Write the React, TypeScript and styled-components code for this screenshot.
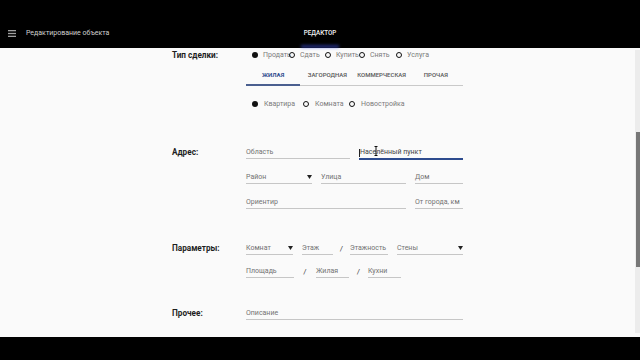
import React from 'react'
import styled, { createGlobalStyle } from 'styled-components'

const Global = createGlobalStyle`
  html, body { margin: 0; padding: 0; overflow: hidden; background: #000; }
  body { font-family: Roboto, "Noto Sans", sans-serif; }
  * { box-sizing: border-box; }
`

const BLUE = '#2d4b8e'

const Screen = styled.div`
  width: 640px;
  height: 360px;
  display: flex;
  flex-direction: column;
  background: #000;
`

const Header = styled.header`
  height: 48px;
  background: #000;
  display: grid;
  grid-template-columns: 1fr auto 1fr;
  align-items: end;
`

const Brand = styled.div`
  display: flex;
  align-items: center;
  gap: 10px;
  padding-left: 8px;
  height: 28px;
  padding-bottom: 2px;
  color: #d0d0d0;
  font-size: 7px;
`

const HeadTab = styled.div`
  position: relative;
  width: 42px;
  height: 28px;
  display: flex;
  align-items: center;
  justify-content: center;
  padding-bottom: 2px;
  color: #f2f2f2;
  font-size: 6.3px;
  font-weight: 500;
  &::after {
    content: '';
    position: absolute;
    left: 2px;
    right: 2px;
    bottom: 0;
    height: 3px;
    background: rgba(60, 80, 230, 0.55);
    filter: blur(1.5px);
  }
`

const Body = styled.div`
  flex: 1;
  display: flex;
  background: #fafafa;
  overflow: hidden;
`

const Content = styled.main`
  flex: 1;
  display: flex;
  justify-content: center;
`

const Form = styled.div`
  width: 291px;
  display: flex;
  flex-direction: column;
`

const Section = styled.section<{ $mt: number }>`
  display: grid;
  grid-template-columns: 74px 217px;
  margin-top: ${(p) => p.$mt}px;
`

const Label = styled.div<{ $pt: number }>`
  padding-top: ${(p) => p.$pt}px;
  line-height: 14px;
  font-size: 8.2px;
  font-weight: 700;
  color: #1e1e1e;
`

const Stack = styled.div<{ $gap: number }>`
  display: flex;
  flex-direction: column;
  gap: ${(p) => p.$gap}px;
`

const RadioRow = styled.div<{ $mt?: number }>`
  display: flex;
  align-items: center;
  height: 14px;
  padding-left: 6px;
  margin-top: ${(p) => p.$mt ?? 0}px;
`

const RadioItem = styled.label<{ $w?: number; $gap: number }>`
  display: flex;
  align-items: center;
  gap: ${(p) => p.$gap}px;
  width: ${(p) => (p.$w ? `${p.$w}px` : 'auto')};
  flex: none;
  font-size: 7px;
  color: #7a7a7a;
  white-space: nowrap;
`

const Circle = styled.span<{ $on?: boolean }>`
  width: 6px;
  height: 6px;
  border-radius: 50%;
  flex: none;
  background: ${(p) => (p.$on ? '#111' : 'transparent')};
  border: ${(p) => (p.$on ? 'none' : '1.4px solid #111')};
`

const Tabs = styled.div`
  display: grid;
  grid-template-columns: repeat(4, 1fr);
  height: 23px;
  margin-top: 1px;
  border-bottom: 1px solid #c9c9c9;
`

const Tab = styled.div<{ $active?: boolean }>`
  display: flex;
  align-items: center;
  justify-content: center;
  font-size: 6px;
  font-weight: ${(p) => (p.$active ? 700 : 500)};
  color: ${(p) => (p.$active ? BLUE : '#555')};
  border-bottom: 2px solid ${(p) => (p.$active ? '#4a5f8f' : 'transparent')};
  margin-bottom: -1px;
  padding-top: 1px;
`

const Row = styled.div`
  display: flex;
  gap: 9px;
`

const Field = styled.div<{ $w: number; $focused?: boolean }>`
  position: relative;
  width: ${(p) => p.$w}px;
  height: 16px;
  flex: none;
  display: flex;
  align-items: flex-end;
  justify-content: space-between;
  padding-bottom: 1px;
  font-size: 7px;
  line-height: 10px;
  color: ${(p) => (p.$focused ? '#444' : '#727272')};
  border-bottom: 1px solid ${(p) => (p.$focused ? BLUE : '#c6c6c6')};
  box-shadow: ${(p) => (p.$focused ? `0 1px 0 ${BLUE}` : 'none')};
  white-space: nowrap;
`

const Caret = styled.span`
  width: 1px;
  height: 8px;
  background: #222;
  align-self: center;
  margin-top: 3px;
`

const Text = styled.span`
  display: flex;
  align-items: center;
`

const Sep = styled.div<{ $w: number }>`
  width: ${(p) => p.$w}px;
  flex: none;
  display: flex;
  align-items: flex-end;
  justify-content: center;
  padding-bottom: 2px;
  font-size: 8px;
  color: #444;
  margin: 0 -9px;
`

const Beam = styled.svg`
  position: absolute;
  left: 15px;
  top: 3px;
`

const ScrollTrack = styled.div`
  width: 5px;
  margin: 2px 0 4px;
  background: #ececec;
  display: flex;
  justify-content: flex-end;
`

const Thumb = styled.div`
  width: 4px;
  height: 135px;
  margin-top: 82px;
  background: #777;
`

const Footer = styled.footer`
  height: 23px;
  background: #000;
`

const Arrow = () => (
  <svg width="5" height="4" viewBox="0 0 5 4" style={{ marginBottom: 3 }}>
    <polygon points="0,0 5,0 2.5,4" fill="#222" />
  </svg>
)

const Burger = () => (
  <svg width="8" height="7" viewBox="0 0 8 7">
    <rect y="0" width="8" height="1.3" fill="#a0a0a0" />
    <rect y="2.85" width="8" height="1.3" fill="#a0a0a0" />
    <rect y="5.7" width="8" height="1.3" fill="#a0a0a0" />
  </svg>
)

const deals = [
  { t: 'Продать', w: 37, on: true },
  { t: 'Сдать', w: 36 },
  { t: 'Купить', w: 34 },
  { t: 'Снять', w: 37 },
  { t: 'Услуга' },
]

const kinds = [
  { t: 'Квартира', w: 51, on: true },
  { t: 'Комната', w: 46 },
  { t: 'Новостройка' },
]

const tabs = ['Жилая', 'Загородная', 'Коммерческая', 'Прочая']

export default function App() {
  return (
    <Screen>
      <Global />
      <Header>
        <Brand>
          <Burger />
          <span>Редактирование объекта</span>
        </Brand>
        <HeadTab>РЕДАКТОР</HeadTab>
        <div />
      </Header>

      <Body>
        <Content>
          <Form>
            <Section $mt={0}>
              <Label $pt={0}>Тип сделки:</Label>
              <div>
                <RadioRow>
                  {deals.map((d) => (
                    <RadioItem key={d.t} $w={d.w} $gap={5}>
                      <Circle $on={d.on} />
                      {d.t}
                    </RadioItem>
                  ))}
                </RadioRow>
                <Tabs>
                  {tabs.map((t, i) => (
                    <Tab key={t} $active={i === 0}>
                      {t.toUpperCase()}
                    </Tab>
                  ))}
                </Tabs>
                <RadioRow $mt={11}>
                  {kinds.map((d) => (
                    <RadioItem key={d.t} $w={d.w} $gap={6}>
                      <Circle $on={d.on} />
                      {d.t}
                    </RadioItem>
                  ))}
                </RadioRow>
              </div>
            </Section>

            <Section $mt={32}>
              <Label $pt={2}>Адрес:</Label>
              <Stack $gap={9}>
                <Row>
                  <Field $w={104}>Область</Field>
                  <Field $w={104} $focused>
                    <Text>
                      <Caret />
                      Населённый пункт
                    </Text>
                    <Beam width="4" height="10" viewBox="0 0 4 10">
                      <path d="M0.5 0.5h3M2 0.5v9M0.5 9.5h3" stroke="#111" strokeWidth="1" fill="none" />
                    </Beam>
                  </Field>
                </Row>
                <Row>
                  <Field $w={66}>
                    Район
                    <Arrow />
                  </Field>
                  <Field $w={85}>Улица</Field>
                  <Field $w={48}>Дом</Field>
                </Row>
                <Row>
                  <Field $w={160}>Ориентир</Field>
                  <Field $w={48}>От города, км</Field>
                </Row>
              </Stack>
            </Section>

            <Section $mt={30}>
              <Label $pt={2}>Параметры:</Label>
              <Stack $gap={7}>
                <Row>
                  <Field $w={47}>
                    Комнат
                    <Arrow />
                  </Field>
                  <Field $w={31}>Этаж</Field>
                  <Sep $w={17}>/</Sep>
                  <Field $w={38}>Этажность</Field>
                  <Field $w={66}>
                    Стены
                    <Arrow />
                  </Field>
                </Row>
                <Row>
                  <Field $w={48}>Площадь</Field>
                  <Sep $w={22}>/</Sep>
                  <Field $w={33}>Жилая</Field>
                  <Sep $w={19}>/</Sep>
                  <Field $w={33}>Кухни</Field>
                </Row>
              </Stack>
            </Section>

            <Section $mt={26}>
              <Label $pt={2}>Прочее:</Label>
              <Field $w={217}>Описание</Field>
            </Section>
          </Form>
        </Content>
        <ScrollTrack>
          <Thumb />
        </ScrollTrack>
      </Body>

      <Footer />
    </Screen>
  )
}
